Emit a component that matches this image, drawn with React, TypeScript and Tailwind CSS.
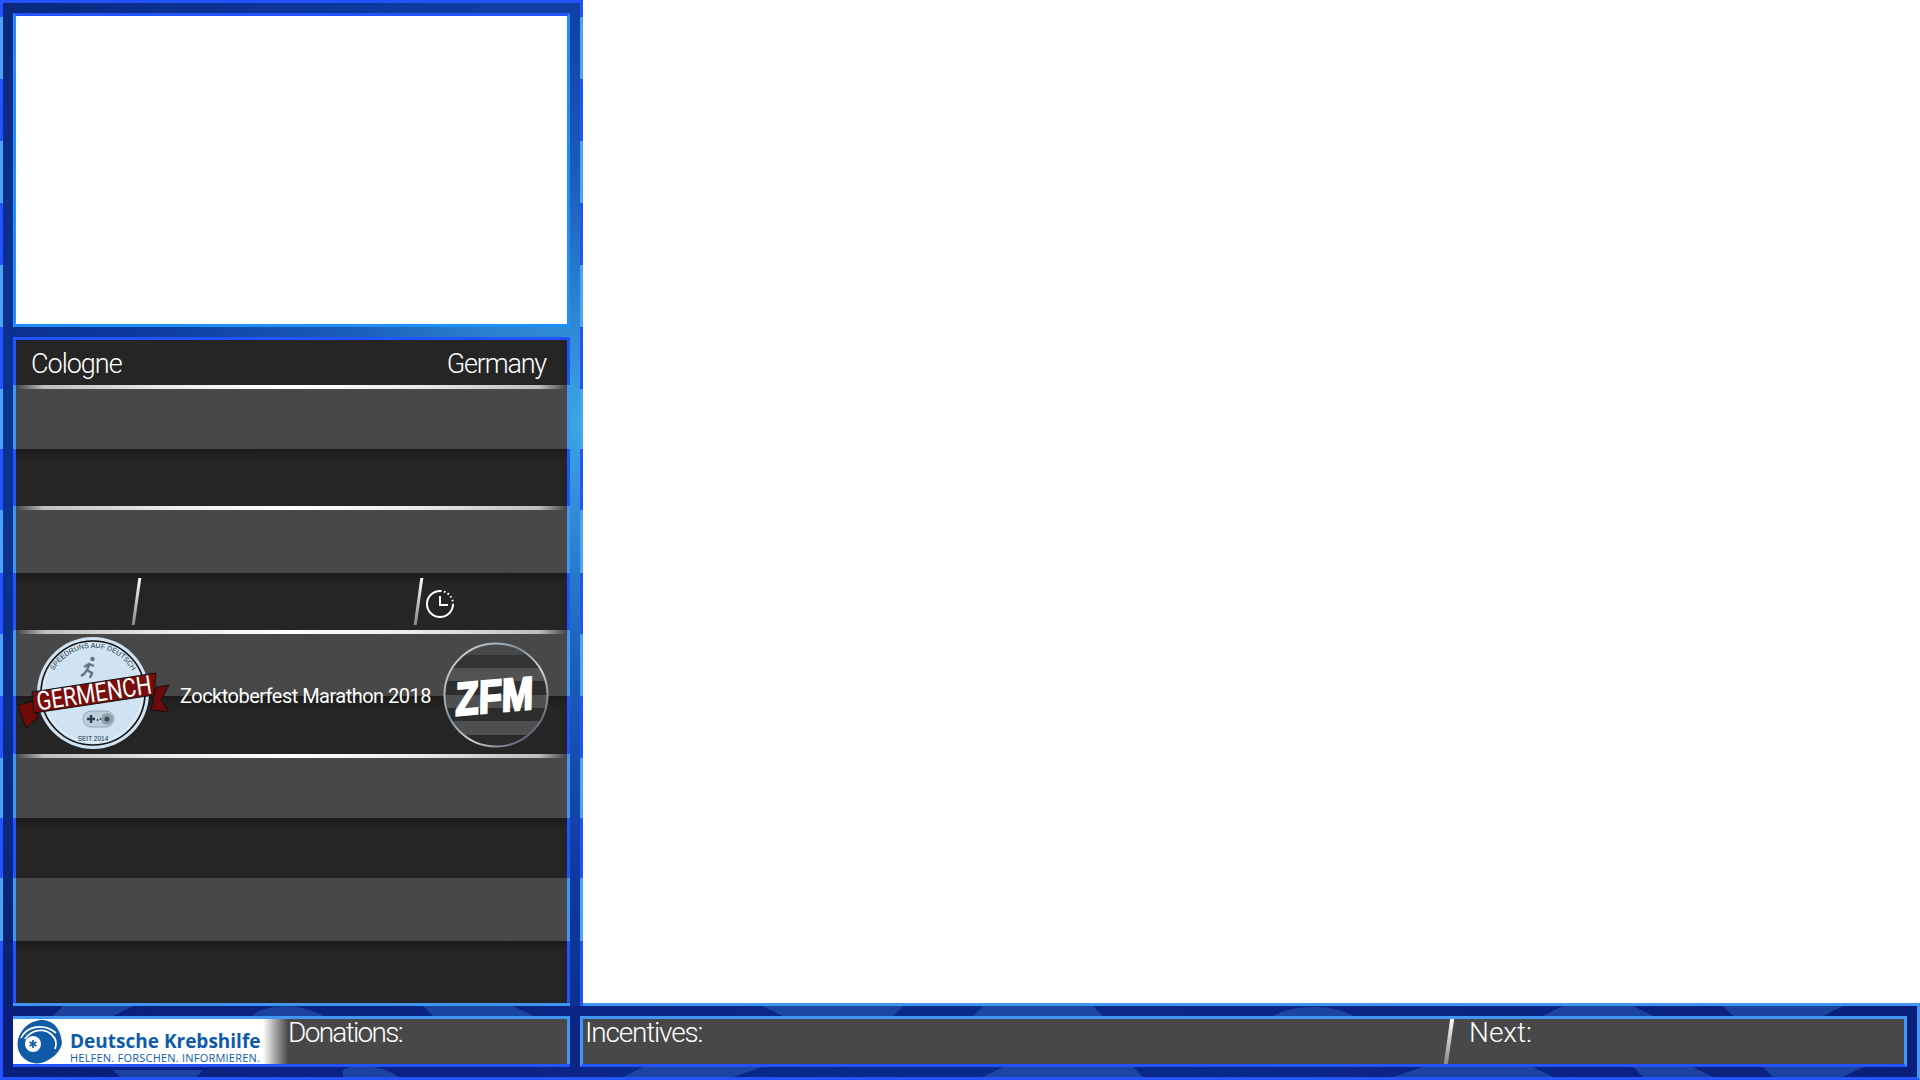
const Slash = ({ className = '' }: { className?: string }) => (
  <div
    className={`w-[3px] skew-x-[-8deg] bg-gradient-to-b from-white to-[#8a8a8a] ${className}`}
  />
);

const Line = () => (
  <div className="h-[4px] border-x-[3px] border-[#3f96f5] bg-[#484848]">
    <div className="h-full rounded-[2px] bg-[linear-gradient(90deg,#444_0%,#bdbdbd_5%,#ececec_28%,#fff_50%,#ececec_72%,#bdbdbd_95%,#444_100%)]" />
  </div>
);

const Grey = ({ h }: { h: string }) => (
  <div className={`${h} border-x-[3px] border-[#3f96f5] bg-[#484848]`} />
);

const Dark = ({ h, children }: { h: string; children?: React.ReactNode }) => (
  <div
    className={`${h} flex border-x-[3px] border-[#2352ff] bg-[linear-gradient(180deg,#1b1b1b_0,#252525_12px)]`}
  >
    {children}
  </div>
);

const Clock = () => (
  <svg width="30" height="30" viewBox="0 0 30 30" fill="none" stroke="white">
    <path d="M15 2 A13 13 0 1 0 28 15" strokeWidth="2" />
    <path d="M15 2 A13 13 0 0 1 28 15" strokeWidth="2" strokeDasharray="1.6 2.4" />
    <path d="M15 7 V16 H23" strokeWidth="2" />
  </svg>
);

const Germench = () => (
  <svg width="155" height="120" viewBox="0 0 155 120" className="ml-[5px] shrink-0">
    <circle cx="75" cy="59" r="56" fill="#cfe3f2" />
    <circle cx="75" cy="59" r="52" fill="none" stroke="#111" strokeWidth="1.6" />
    <circle cx="75" cy="59" r="49.5" fill="none" stroke="#eef6fb" strokeWidth="0.8" />
    <defs>
      <path id="badge-top" d="M33 75 A45 45 0 1 1 117 75" />
    </defs>
    <text fontFamily="'Liberation Sans', sans-serif" fontSize="7" fill="#22343f">
      <textPath href="#badge-top" startOffset="50%" textAnchor="middle">
        SPEEDRUNS AUF DEUTSCH
      </textPath>
    </text>
    <circle cx="74.5" cy="25" r="2.2" fill="#5f7686" />
    <path
      d="M72 29 L69 36 L74 39 L72 44 M69 36 L66 40 L63 42 M71 30 L76 32 M71 30 L66 33"
      fill="none"
      stroke="#5f7686"
      strokeWidth="2.4"
    />
    <polygon points="0,71 16,67 20,84 8,94" fill="#6f0a0a" stroke="#111" />
    <polygon points="138,53 151,51 143,66 151,78 133,76" fill="#6f0a0a" stroke="#111" />
    <polygon points="14,58 138,39 136,61 16,79" fill="#7a0c0c" stroke="#111" />
    <text
      x="76"
      y="68"
      transform="rotate(-8.5 76 59)"
      textAnchor="middle"
      textLength="116"
      lengthAdjust="spacingAndGlyphs"
      fontFamily="Roboto, sans-serif"
      fontWeight="400"
      fontSize="26"
      fill="white"
    >
      GERMENCH
    </text>
    <rect x="65" y="77" width="31" height="16" rx="8" fill="#bccfdb" stroke="#8fa6b5" />
    <path d="M73 81 V89 M69 85 H77" stroke="#2c3e4c" strokeWidth="2.4" />
    <circle cx="79.5" cy="86" r="0.9" fill="#2c3e4c" />
    <circle cx="82.5" cy="85" r="0.9" fill="#2c3e4c" />
    <circle cx="89" cy="85" r="6" fill="#8fa1ad" />
    <circle cx="89" cy="85" r="2.5" fill="#3b4b57" />
    <text
      x="75"
      y="107"
      textAnchor="middle"
      fontFamily="'Liberation Sans', sans-serif"
      fontSize="6.5"
      fill="#22343f"
    >
      SEIT 2014
    </text>
  </svg>
);

const Zfm = () => (
  <svg
    width="108"
    height="108"
    viewBox="0 0 108 108"
    className="mt-[4px] mr-[20px] ml-auto shrink-0"
  >
    <defs>
      <clipPath id="zfm-clip">
        <circle cx="54" cy="53" r="52" />
      </clipPath>
      <linearGradient id="zfm-ring" x1="0" y1="0" x2="1" y2="1">
        <stop offset="0" stopColor="#e8e8e8" />
        <stop offset="0.4" stopColor="#7f93a3" />
        <stop offset="0.6" stopColor="#d8d8d8" />
        <stop offset="1" stopColor="#1c2c42" />
      </linearGradient>
    </defs>
    <g clipPath="url(#zfm-clip)">
      <rect width="108" height="108" fill="#484848" />
      <rect y="13" width="108" height="13" fill="#333" />
      <rect y="26" width="108" height="13" fill="#525252" />
      <rect y="39" width="108" height="14" fill="#2e2e2e" />
      <rect y="53" width="108" height="13" fill="#4f4f4f" />
      <rect y="66" width="108" height="13" fill="#2c2c2c" />
      <rect y="79" width="108" height="14" fill="#4f4f4f" />
      <rect y="93" width="108" height="15" fill="#2a2a2a" />
    </g>
    <circle cx="54" cy="53" r="51.5" fill="none" stroke="url(#zfm-ring)" strokeWidth="2" />
    <text
      x="58"
      y="70"
      transform="rotate(-5 54 53) skewX(-6)"
      textAnchor="middle"
      textLength="78"
      lengthAdjust="spacingAndGlyphs"
      fontFamily="'Liberation Sans', sans-serif"
      fontWeight="700"
      fontSize="46"
      fill="white"
      stroke="white"
      strokeWidth="2.4"
    >
      ZFM
    </text>
  </svg>
);

const KrebshilfeMark = () => (
  <svg width="46" height="45" viewBox="0 0 46 45" className="shrink-0">
    <circle cx="20" cy="25" r="19.5" fill="#0f5ba8" />
    <path d="M1 24 C2 10 14 1 25 1 C36 1 44 10 45 24 C43 33 37 38 31 41 L20 30 Z" fill="#0f5ba8" />
    <path d="M4 19 C9 8 26 3 39 14" fill="none" stroke="white" strokeWidth="1.8" />
    <path d="M8 20 C14 11 27 8 35 16 C39 20 40 25 38 30" fill="none" stroke="white" strokeWidth="1.8" />
    <circle cx="16" cy="25" r="8" fill="white" />
    <path
      d="M16 21 V29 M12.5 23 L19.5 27 M19.5 23 L12.5 27"
      stroke="#0f5ba8"
      strokeWidth="1.6"
    />
  </svg>
);

const Backdrop = () => (
  <svg className="absolute inset-0 h-full w-full" fill="#2a5fb8" fillOpacity="0.55">
    <path d="M60 0 h70 l-20 10 h-60 z" />
    <path d="M250 10 C260 -3 300 -3 320 10 Z" />
    <path d="M420 0 h90 l20 10 h-100 z" />
    <path d="M110 64 h90 l-10 10 h-70 z" />
    <path d="M340 64 C350 58 380 58 395 71 L340 71 Z" />
    <path d="M760 0 h140 l-10 10 h-110 z" />
    <path d="M980 0 h110 l10 10 h-130 z" />
    <path d="M1270 10 C1290 -2 1330 -2 1350 10 Z" />
    <path d="M1560 0 h70 l20 10 h-110 z" />
    <path d="M1720 0 h120 l-20 10 h-90 z" />
    <path d="M640 61 h120 l-30 10 h-110 z" />
    <path d="M1000 61 h130 l10 10 h-160 z" />
    <path d="M1420 61 h110 l20 10 h-160 z" />
    <path d="M1630 61 h60 l20 10 h-70 z" />
    <path d="M1760 61 h100 l-20 10 h-70 z" />
  </svg>
);

export default function App() {
  return (
    <div className="flex h-[1080px] w-[1920px] flex-col overflow-hidden bg-white font-['Roboto',sans-serif] font-light text-white">
      <div className="flex h-[1006px]">
        <div className="w-[583px] shrink-0 bg-[linear-gradient(180deg,#2352ff_0,#2352ff_17px,#4aa3f5_17px,#4aa3f5_79px,#2352ff_79px,#2352ff_141px,#4aa3f5_141px,#4aa3f5_203px,#2352ff_203px,#2352ff_265px,#4aa3f5_265px,#4aa3f5_327px,#2352ff_327px,#2352ff_389px,#4aa3f5_389px,#4aa3f5_449px,#2352ff_449px,#2352ff_510px,#4aa3f5_510px,#4aa3f5_573px,#2352ff_573px,#2352ff_634px,#4aa3f5_634px,#4aa3f5_696px,#2352ff_696px,#2352ff_758px,#4aa3f5_758px,#4aa3f5_818px,#2352ff_818px,#2352ff_878px,#4aa3f5_878px,#4aa3f5_941px,#2352ff_941px,#2352ff_1006px)] px-[3px] pt-[3px]">
          <div className="flex h-full flex-col gap-[10px] bg-[radial-gradient(ellipse_at_100%_42%,#3ca6e4_0%,#1a5dbb_30%,#0d3aa0_55%,#08206f_100%)] pt-[10px] pr-[10px] pl-[10px]">
            <div className="h-[314px] border-[3px] border-[#1e8fff] border-t-[#2352ff] bg-white" />
            <div className="flex flex-1 flex-col border-y-[3px] border-t-[#2352ff] border-b-[#3f96f5]">
              <Dark h="h-[45px]">
                <div className="flex flex-1 items-center justify-between bg-[#252525] pt-[3px] pr-[21px] pl-[15px] text-[27px] leading-none">
                  <span className="tracking-[-1px]">Cologne</span>
                  <span className="tracking-[-1.2px]">Germany</span>
                </div>
              </Dark>
              <Line />
              <Grey h="h-[60px]" />
              <Dark h="h-[57px]" />
              <Line />
              <Grey h="h-[63px]" />
              <Dark h="h-[57px]">
                <Slash className="mt-[5px] ml-[119px] h-[47px]" />
                <Slash className="mt-[5px] ml-[279px] h-[47px]" />
                <div className="mt-[16px] ml-[5px]">
                  <Clock />
                </div>
              </Dark>
              <Line />
              <div className="relative">
                <Grey h="h-[62px]" />
                <Dark h="h-[58px]" />
                <div className="absolute inset-0 flex items-center">
                  <Germench />
                  <span className="mt-[4px] ml-[7px] text-[20px] leading-none font-normal tracking-[-0.52px] whitespace-nowrap">
                    Zocktoberfest Marathon 2018
                  </span>
                  <Zfm />
                </div>
              </div>
              <Line />
              <Grey h="h-[60px]" />
              <Dark h="h-[60px]" />
              <Grey h="h-[63px]" />
              <Dark h="flex-1" />
            </div>
          </div>
        </div>
        <div className="flex-1 border-b-[3px] border-[#3f96f5] bg-white" />
      </div>

      <div className="relative flex flex-1 gap-[10px] border-x-[3px] border-b-[3px] border-l-[#2352ff] border-r-[#3f96f5] border-b-[#2352ff] bg-[linear-gradient(90deg,#0a1f7c_0%,#0b2a88_50%,#0a1f7c_100%)] pt-[10px] pl-[10px]">
        <Backdrop />
        <div className="relative flex h-[51px] w-[557px] border-y-[3px] border-t-[#3f96f5] border-b-[#2352ff]">
          <div className="flex w-[275px] items-center gap-[7px] bg-[linear-gradient(90deg,#fff_0,#fff_250px,#484848_275px)] pl-[4px] font-['Open_Sans',sans-serif] font-normal text-[#0f5ba8]">
            <KrebshilfeMark />
            <div className="flex flex-col pt-[11px]">
              <span className="text-[19px] leading-[22px] font-bold whitespace-nowrap">
                Deutsche Krebshilfe
              </span>
              <span className="text-[11px] leading-[12px] tracking-[0.22px] whitespace-nowrap">
                HELFEN. FORSCHEN. INFORMIEREN.
              </span>
            </div>
          </div>
          <div className="flex-1 border-r-[3px] border-[#3f96f5] bg-[#484848] text-[28px] leading-[28px] tracking-[-1.7px]">
            Donations:
          </div>
        </div>
        <div className="relative mr-[10px] flex h-[51px] flex-1 border-[3px] border-[#3f96f5] border-b-[#2352ff] bg-[#484848] text-[28px] leading-[28px]">
          <div className="w-[864px] pl-[2px] tracking-[-1.2px]">Incentives:</div>
          <Slash className="h-[45px] w-[4px]" />
          <div className="pl-[18px]">Next:</div>
        </div>
      </div>
    </div>
  );
}
